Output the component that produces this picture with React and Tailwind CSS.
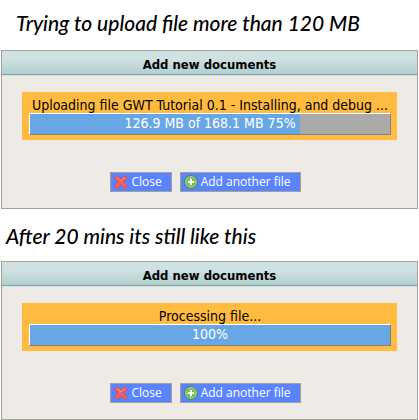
import React from "react";

const CloseIcon = () => (
  <svg width="14" height="14" viewBox="0 0 14 14" aria-hidden="true">
    <path
      d="M.8 3 3 .8 7 4.2 10.8.9 13.4 2.4 9.7 6.8 13.2 11.6 11.2 13.4 7 9.9 2.8 13.4.6 11.2 4 7Z"
      fill="#fa5f5a"
      stroke="#e5393c"
      strokeWidth="0.7"
      strokeLinejoin="round"
    />
    <path d="M3 2.2 7 5.8 11 2.2" fill="none" stroke="#ff958c" strokeWidth="1" />
  </svg>
);

const AddIcon = () => (
  <svg width="14" height="14" viewBox="0 0 14 14" aria-hidden="true">
    <circle cx="7" cy="7" r="6.5" fill="#5dab45" stroke="#3c8a30" strokeWidth="0.7" />
    <circle cx="7" cy="7" r="5.3" fill="#72b95a" stroke="#b5dca4" strokeWidth="0.9" />
    <path d="M7 3.8v6.4M3.8 7h6.4" stroke="#fff" strokeWidth="2" />
  </svg>
);

const DialogButton = ({ icon, children }) => (
  <button
    type="button"
    className="flex h-5 items-center gap-[3px] border border-[#a3a38f] bg-[#5a84ff] pr-[9px] pl-[3px] font-['Open_Sans',sans-serif] text-[12px] leading-4 whitespace-nowrap text-white"
  >
    {icon}
    {children}
  </button>
);

const Caption = ({ children }) => (
  <p className="font-['Lato',sans-serif] text-[21px] leading-6 font-medium whitespace-nowrap text-black italic">
    {children}
  </p>
);

const UploadDialog = ({ status, progress, percent }) => (
  <section className="mx-px border border-[#a3a595] bg-[#eeebe6]">
    <h2 className="border-b border-[#78a5a5] bg-linear-to-b from-[#cfe1e0] from-35% to-[#b2cfce] pt-1 text-center text-[13px] leading-[19px] font-bold">
      Add new documents
    </h2>
    <div className="border-t border-[#d5e5e4] px-5 pt-4 pb-4">
      <div className="bg-[#ffbc40] pt-[5px] pr-1.5 pb-[5px] pl-[7px] text-center text-[14px] leading-4">
        <p className="truncate">{status}</p>
        <div className="relative h-[22px] border border-t-white border-r-[#808080] border-b-[#808080] border-l-white bg-[#aaaaaa]">
          <div className="h-full bg-[#68a7e5]" style={{ width: `${percent}%` }} />
          <span className="absolute inset-0 leading-[18px] text-white">{progress}</span>
        </div>
      </div>
      <div className="mt-8 flex justify-center gap-2 pr-2">
        <DialogButton icon={<CloseIcon />}>Close</DialogButton>
        <DialogButton icon={<AddIcon />}>Add another file</DialogButton>
      </div>
    </div>
  </section>
);

const App = () => (
  <main className="bg-white font-['DejaVu_Sans_Condensed','DejaVu_Sans',Verdana,sans-serif] text-black">
    <div className="px-4 pt-[11px] pb-[15px]">
      <Caption>Trying to upload file more than 120 MB</Caption>
    </div>
    <UploadDialog
      status="Uploading file GWT Tutorial 0.1 - Installing, and debug ..."
      progress="126.9 MB of 168.1 MB 75%"
      percent={75}
    />
    <div className="px-1.5 pt-[15px] pb-[13px]">
      <Caption>After 20 mins its still like this</Caption>
    </div>
    <UploadDialog status="Processing file..." progress="100%" percent={100} />
  </main>
);

export default App;
